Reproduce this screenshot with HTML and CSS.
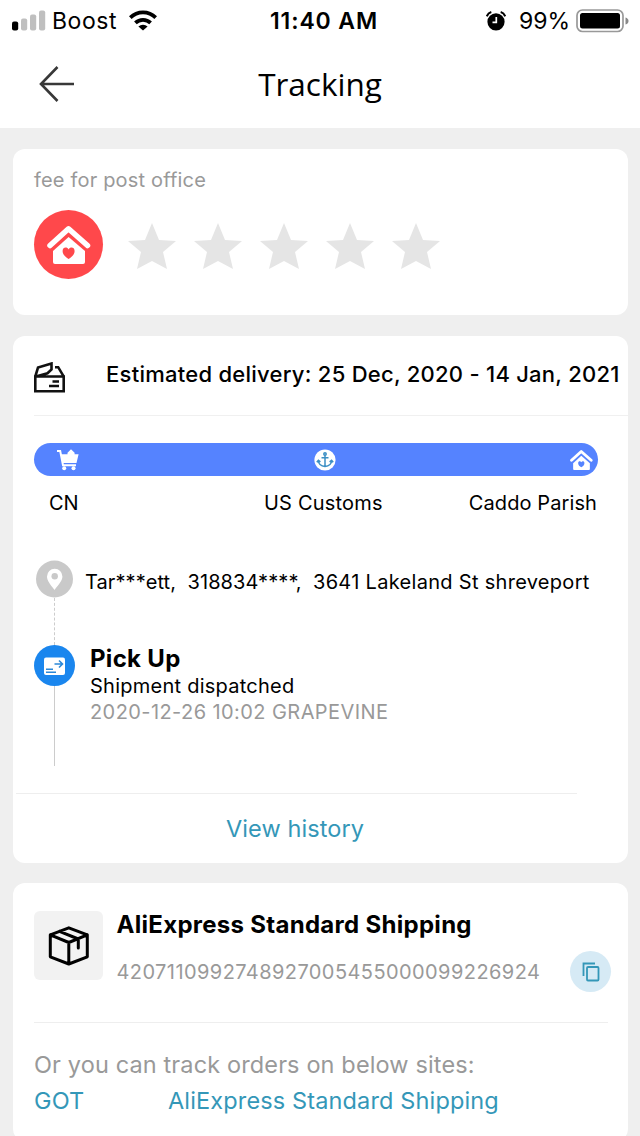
FILE: index.html
```html
<!DOCTYPE html>
<html lang="en">
<head>
<meta charset="utf-8">
<title>Tracking</title>
<link rel="stylesheet" href="styles.css">
</head>
<body>
<svg class="defs" aria-hidden="true">
  <symbol id="star" viewBox="0 0 48 46"><path d="M24 0l7 17 17 1-13 11 4 17-15-8-15 8 4-17L0 18l17-1z"/></symbol>
  <symbol id="home" viewBox="0 0 44 40">
    <path d="M3 20.500L21.500 3.800 40.500 20.500" fill="none" stroke="#fff" stroke-width="5.500" stroke-linecap="round" stroke-linejoin="round"/>
    <path d="M21.600 12L38 26v11q0 2-2 2H8q-2 0-2-2V26z" fill="#fff"/>
    <path class="heart" d="M21.600 34c-3-2-6-4.500-6-8 0-4 4.500-4.500 6-1.500 1.500-3 6-2.500 6 1.500 0 3.500-3 6-6 8z"/>
  </symbol>
</svg>
<header class="top">
  <div class="status">
    <div class="carrier">
      <svg class="signal" width="34" height="21" viewBox="0 0 34 21"><rect x="0" y="11.500" width="6.200" height="9" rx="2"/><g fill="#bfbfbf"><rect x="9" y="8.500" width="6.200" height="12" rx="2"/><rect x="18" y="4.500" width="6.200" height="16" rx="2"/><rect x="27" y="0.500" width="6.200" height="20" rx="2"/></g></svg>
      <span class="carrier-name">Boost</span>
      <svg class="wifi" width="28" height="21" viewBox="0 0 28 21"><g fill="none" stroke="#000" stroke-width="3.800"><path d="M1.300 7.600a18 18 0 0 1 25.400 0"/><path d="M6.400 12.900a11 11 0 0 1 15.200 0"/></g><path d="M9.400 16.400a7 7 0 0 1 9.200 0L14 20.500z"/></svg>
    </div>
    <span class="time">11:40 AM</span>
    <div class="power">
      <svg class="alarm" width="20" height="20" viewBox="0 0 20 20"><circle cx="10" cy="10.800" r="8.600"/><path d="M.8 5.300Q2 2 5.300 1M14.700 1Q18 2 19.200 5.300" fill="none" stroke="#000" stroke-width="2"/><path d="M10.300 6v5.300H6.500" fill="none" stroke="#fff" stroke-width="1.700"/></svg>
      <span class="percent">99%</span>
      <svg class="battery" width="53" height="24" viewBox="0 0 53 24"><rect x="1" y="1" width="46" height="21.500" rx="5.500" fill="#fff" stroke="#999" stroke-width="1.700"/><rect x="4" y="4" width="40" height="15.500" rx="2.500"/><path d="M49.500 8.500q3 1 3 3.500t-3 3.500z" fill="#888"/></svg>
    </div>
  </div>
  <div class="nav">
    <svg class="back" width="36" height="36" viewBox="0 0 36 36"><path d="M18.500 1L2 18l16.500 17M2 18h33" fill="none" stroke="#383838" stroke-width="2.600"/></svg>
    <h1 class="title">Tracking</h1>
  </div>
</header>
<main class="cards">
  <section class="card rating">
    <p class="fee">fee for post office</p>
    <div class="rate-row">
      <div class="badge"><svg width="44" height="40"><use href="#home"/></svg></div>
      <div class="stars">
        <svg><use href="#star"/></svg><svg><use href="#star"/></svg><svg><use href="#star"/></svg><svg><use href="#star"/></svg><svg><use href="#star"/></svg>
      </div>
    </div>
  </section>
  <section class="card delivery">
    <div class="estimate">
      <svg class="parcel" width="31" height="31" viewBox="0 0 31 31" fill="none" stroke="#111" stroke-width="2.600"><path d="M1.300 14.500h28.400v14.800H1.300zM1.300 14.500L4 5.600 17.500 1.500v6L13.500 11.300 2 14.500M21 5.200h3.200l5.300 9M18.500 19.500h6.500M15 24h10"/></svg>
      <span class="estimate-text">Estimated delivery: 25 Dec, 2020 - 14 Jan, 2021</span>
    </div>
    <div class="progress">
      <svg class="cart" width="22" height="22" viewBox="0 0 22 22"><path d="M0 2h3.200L6 16.200H19" fill="none" stroke="#fff" stroke-width="2"/><path d="M4 5.200h6.500V3.800L14 .2l3.600 3.600v1.400h4L19.500 14H5.700z" fill="#fff"/><circle cx="7.200" cy="19.300" r="2" fill="#fff"/><circle cx="16.500" cy="19.300" r="2" fill="#fff"/></svg>
      <svg class="anchor" width="22" height="22" viewBox="0 0 22 22"><circle cx="11" cy="11" r="10.600" fill="#fff"/><g fill="none" stroke="#3c8fc4" stroke-width="1.500"><circle cx="11" cy="5" r="1.200"/><path d="M11 6.200v11.300M7.500 8.800h7M4.300 11.500q.5 5.500 6.700 6 6.200-.5 6.700-6M2.800 13.200l1.600-2 2 1.600M19.200 13.200l-1.600-2-2 1.600"/></g></svg>
      <svg class="mini-home" width="23" height="22"><use href="#home"/></svg>
    </div>
    <div class="stops"><span class="cn">CN</span><span class="us">US Customs</span><span class="caddo">Caddo Parish</span></div>
    <div class="timeline">
      <div class="rail">
        <svg width="38" height="38" viewBox="0 0 38 38"><circle cx="18.500" cy="19" r="18.500" fill="#c9c9c9"/><path d="M18.500 30C14 24 11 20.500 11 16.500a7.700 7.700 0 0 1 15.400 0C26.400 20.500 23 24 18.500 30z" fill="#fff"/><circle cx="18.700" cy="16.200" r="3.200" fill="#c9c9c9"/></svg>
        <span class="dash"></span>
        <svg width="41" height="41" viewBox="0 0 41 41"><circle cx="20.500" cy="20.500" r="20.500" fill="#1a86ee"/><rect x="10" y="12.500" width="21" height="17.500" rx="2" fill="#fff"/><path d="M20.500 19h8M25 15.500l3.500 3.500-3.500 3.500M12 24.200h7M12 27.200h10" fill="none" stroke="#2b88d8" stroke-width="1.600"/></svg>
        <span class="line"></span>
      </div>
      <div class="events">
        <p class="address"><span class="recipient">Tar***ett,&nbsp; 318834****,&nbsp; </span>3641 Lakeland St shreveport</p>
        <h2 class="pickup">Pick Up</h2>
        <p class="event">Shipment dispatched</p>
        <p class="when">2020-12-26 10:02 GRAPEVINE</p>
      </div>
    </div>
    <a class="history"><span>View history</span></a>
  </section>
  <section class="card shipping">
    <div class="carrier-row">
      <div class="box"><svg width="42" height="40" viewBox="0 0 42 40" fill="none" stroke="#000" stroke-width="3" stroke-linejoin="round" stroke-linecap="round"><path d="M20.800 1.800L39.300 8.800v22L20.800 38 2.300 30.800V8.800zM2.300 8.800L20.800 16.500 39.300 8.800M20.800 16.500V38M11.500 5.300L30.300 13v9"/></svg></div>
      <div class="carrier-info"><h2 class="method">AliExpress Standard Shipping</h2><p class="number">4207110992748927005455000099226924</p></div>
      <div class="copy"><svg width="18" height="20" viewBox="0 0 18 20" fill="none" stroke="#3497b8" stroke-width="1.800"><path d="M1.500 14V1.500h11.500"/><rect x="5" y="5" width="11.500" height="13.500" rx="1"/></svg></div>
    </div>
    <p class="other">Or you can track orders on below sites:</p>
    <div class="sites"><a class="got">GOT</a><a class="ali">AliExpress Standard Shipping</a></div>
  </section>
</main>
</body>
</html>
```
FILE: styles.css
```css
* { box-sizing: border-box; }
body { margin: 0; width: 640px; height: 1136px; overflow: hidden; background: #efefef; color: #000; font-family: Inter, "Liberation Sans", sans-serif; font-size: 20px; line-height: 26px; }
h1, h2, p { margin: 0; font-weight: 400; }
svg { display: block; flex: none; }
span, a, p, h2 { white-space: nowrap; }
.defs { position: absolute; width: 0; height: 0; }
.top { height: 128px; background: #fff; }
.status { display: grid; grid-template-columns: 1fr auto 1fr; height: 41px; padding: 0 11px 0 12px; align-items: center; font-size: 23px; }
.carrier, .power { display: flex; align-items: center; }
.carrier-name { margin-left: 6px; letter-spacing: .55px; }
.wifi { margin-left: 12px; }
.time { padding-left: 7px; font-weight: 600; letter-spacing: .9px; }
.power { justify-content: flex-end; }
.percent { margin: 0 6px 0 13px; }
.nav { display: grid; grid-template-columns: 36px 1fr 36px; padding: 0 39px; height: 86px; align-items: center; }
.title { text-align: center; font: 400 31.500px/44px "Open Sans", "Noto Sans", sans-serif; }
.cards { display: flex; flex-direction: column; padding: 21px 12px 0 13px; }
.card { background: #fff; border-radius: 12px; }
.rating { height: 166px; padding: 18px 21px; margin-bottom: 21px; }
.fee { color: #999; letter-spacing: .18px; }
.rate-row { display: flex; margin-top: 17px; align-items: center; }
.badge { width: 69px; height: 69px; border-radius: 50%; background: #ff484b; display: grid; place-items: center; }
.heart { fill: var(--heart, #ff484b); }
.stars { display: flex; gap: 18px; margin: 3px 0 0 25px; fill: #e5e5e5; }
.stars svg { width: 48px; height: 46px; }
.delivery { height: 527px; margin-bottom: 20px; }
.estimate { display: flex; align-items: center; height: 80px; margin-left: 21px; border-bottom: 1px solid #f0f0f0; font-size: 22px; }
.parcel { margin-top: 4px; }
.estimate-text { margin: -4px 0 0 41px; font-weight: 500; letter-spacing: .26px; }
.progress { display: flex; justify-content: space-between; align-items: center; height: 33px; margin: 27px 30px 0 21px; padding: 0 5px 0 23px; border-radius: 17px; background: #5583ff; }
.mini-home { --heart: #5583ff; }
.stops { display: grid; grid-template-columns: 215px 1fr auto; margin: 14px 31px 0 36px; }
.us { letter-spacing: .2px; }
.caddo { letter-spacing: .1px; }
.timeline { display: flex; margin: 44px 0 0 21px; height: 233px; }
.rail { display: flex; flex-direction: column; align-items: center; width: 41px; }
.dash { height: 47px; border-left: 1px dashed #ccc; }
.line { height: 80px; border-left: 1px solid #ccc; }
.events { margin-left: 10px; padding-top: 9px; }
.address { letter-spacing: .3px; }
.recipient { letter-spacing: .08px; }
.pickup { margin: 51px 0 0 5px; font-size: 24px; font-weight: 700; letter-spacing: .3px; }
.event, .when { margin-left: 5px; }
.event { margin-top: 1px; letter-spacing: .25px; }
.when { color: #999; letter-spacing: .42px; }
.history { display: flex; justify-content: center; align-items: center; margin: 0 51px 0 3px; padding-right: 3px; border-top: 1px solid #eee; height: 70px; color: #3497b8; font-size: 23.500px; letter-spacing: .1px; }
.shipping { height: 258px; padding: 28px 17px 0 21px; }
.carrier-row { display: flex; border-bottom: 1px solid #eee; height: 112px; margin-right: 3px; }
.box { display: grid; place-items: center; width: 69px; height: 69px; border-radius: 6px; background: #f2f2f2; }
.carrier-info { margin-left: 13.500px; width: 453.500px; }
.method { font-size: 24px; font-weight: 700; letter-spacing: .29px; margin-top: 1px; }
.number { margin-top: 21px; color: #999; letter-spacing: .42px; }
.copy { display: grid; place-items: center; flex: none; width: 41px; height: 41px; margin: 40px -3px 0 0; border-radius: 50%; background: #d6eaf5; }
.other { margin-top: 29px; color: #999; font-size: 23.500px; letter-spacing: .13px; }
.sites { display: grid; grid-template-columns: 134px auto; margin-top: 10px; color: #3497b8; font-size: 23.500px; letter-spacing: .14px; }
```
